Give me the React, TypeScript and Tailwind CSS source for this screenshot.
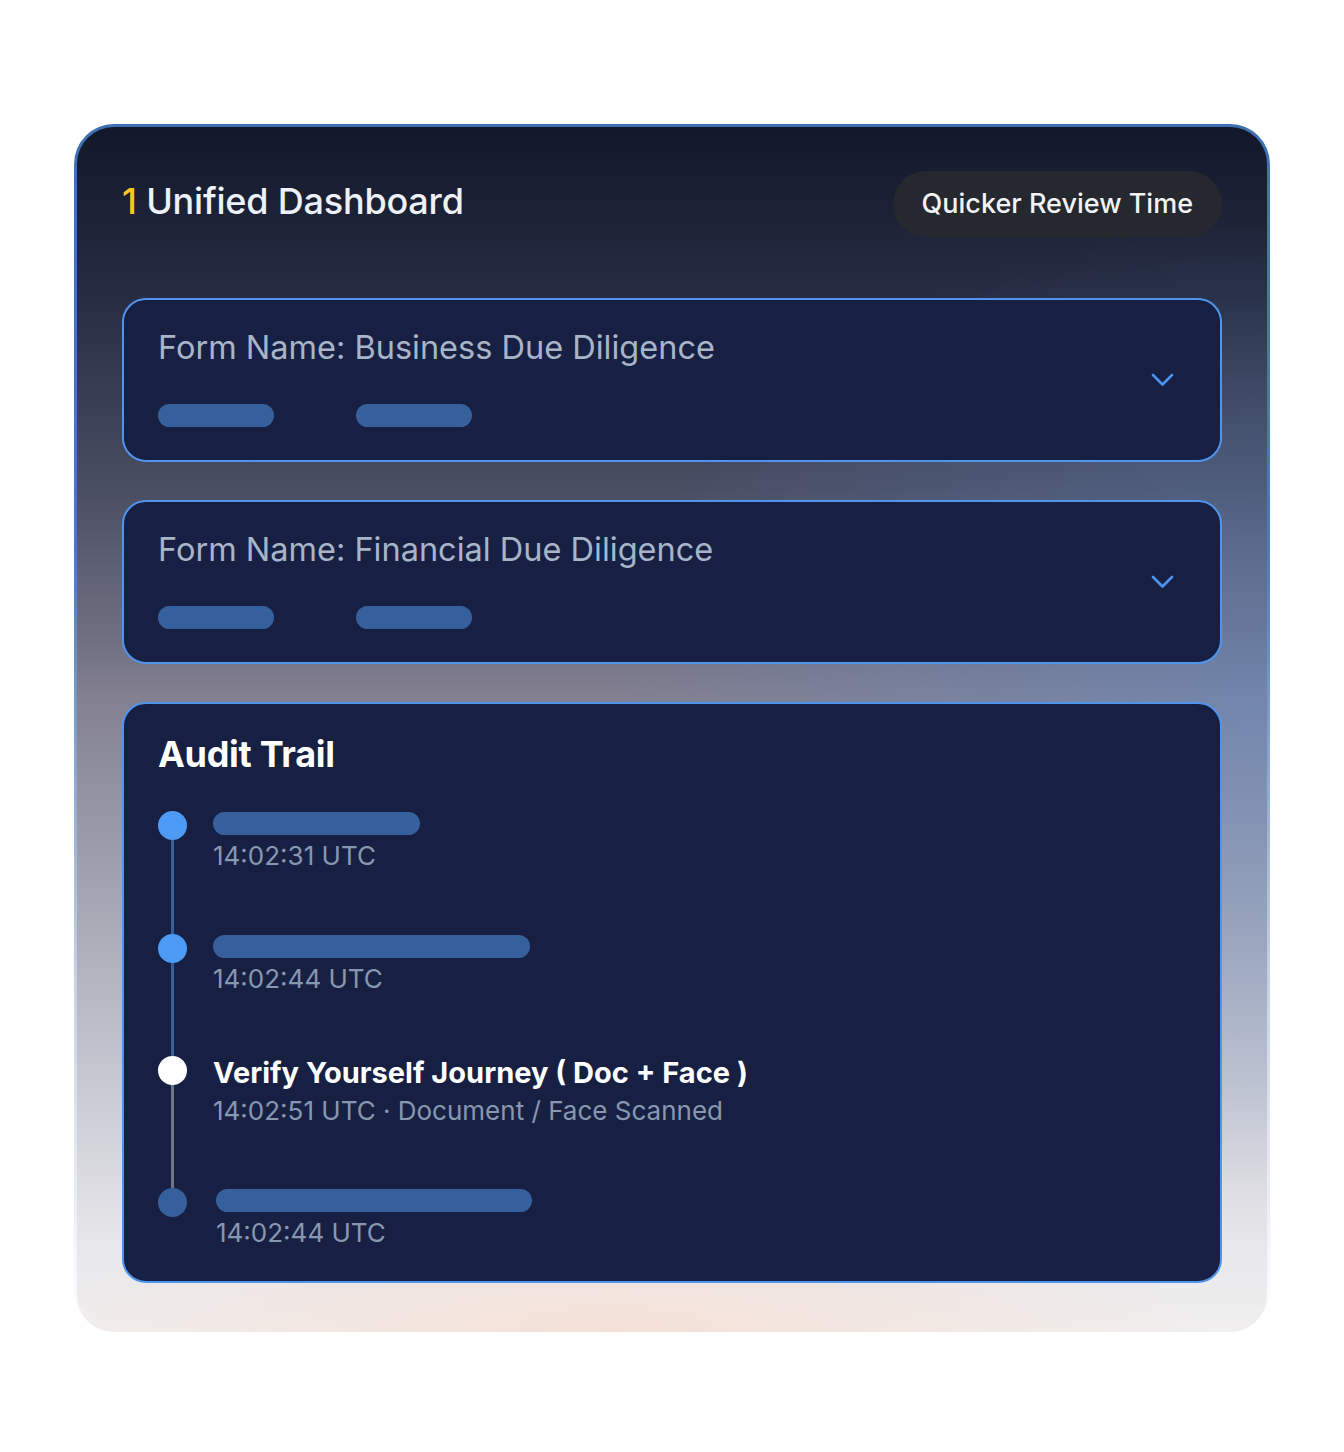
import React from "react";

const font = { fontFamily: "Inter, 'Noto Sans', sans-serif" };

function Chevron() {
  return (
    <svg width="23" height="14" viewBox="0 0 23 14" fill="none">
      <polyline
        points="2,2 11.5,11.5 21,2"
        stroke="#4d94ee"
        strokeWidth="2.6"
        strokeLinecap="round"
        strokeLinejoin="round"
      />
    </svg>
  );
}

function FormPanel({ name }: { name: string }) {
  return (
    <div className="flex h-[164px] items-center justify-between rounded-[24px] border-2 border-[#4f95ee] bg-[#172042] pl-[34px] pr-[46px]">
      <div className="flex flex-col self-start pt-[28px]">
        <div className="text-[32.5px] leading-[40px] text-[#a8b4c8]">Form Name: {name}</div>
        <div className="mt-[36px] flex gap-[82px]">
          <div className="h-[23px] w-[116px] rounded-full bg-[#36609c]" />
          <div className="h-[23px] w-[116px] rounded-full bg-[#36609c]" />
        </div>
      </div>
      <Chevron />
    </div>
  );
}

type Step = {
  dot: string;
  line?: string;
  height: string;
  bar?: string;
  title?: string;
  time: string;
  shift?: string;
};

const steps: Step[] = [
  { dot: "bg-[#4d9af5]", line: "bg-[#36609c]", height: "h-[123px]", bar: "w-[207px]", time: "14:02:31 UTC" },
  { dot: "bg-[#4d9af5]", line: "bg-[#36609c]", height: "h-[122px]", bar: "w-[317px]", time: "14:02:44 UTC" },
  {
    dot: "bg-white",
    line: "bg-[#6f7687]",
    height: "h-[132px]",
    title: "Verify Yourself Journey ( Doc + Face )",
    time: "14:02:51 UTC · Document / Face Scanned",
  },
  { dot: "bg-[#36609c]", height: "h-[100px]", bar: "w-[316px]", time: "14:02:44 UTC", shift: "pl-[3px]" },
];

function Timeline() {
  return (
    <div className="mt-[35px] flex flex-col">
      {steps.map((s, i) => (
        <div key={i} className={`flex ${s.height}`}>
          <div className="flex w-[29px] flex-col items-center">
            <div className={`h-[29px] w-[29px] shrink-0 rounded-full ${s.dot}`} />
            {s.line ? <div className={`w-[3px] flex-1 ${s.line}`} /> : null}
          </div>
          <div className={`ml-[26px] flex flex-col ${s.shift ?? ""}`}>
            {s.bar ? (
              <div className={`mt-[1px] h-[23px] rounded-full bg-[#36609c] ${s.bar}`} />
            ) : (
              <div className="text-[29px] font-bold leading-[34px] text-white">{s.title}</div>
            )}
            <div className="mt-[5px] text-[26px] leading-[31px] text-[#8797b0]">{s.time}</div>
          </div>
        </div>
      ))}
    </div>
  );
}

export default function App() {
  return (
    <div className="min-h-[1452px] w-full bg-white pl-[74px] pt-[124px]" style={font}>
      <div className="w-[1196px] rounded-[40px] bg-[linear-gradient(to_bottom,#3f70b2_0%,#4a7ab8_35%,rgba(140,160,200,0.5)_70%,rgba(240,240,244,0)_100%)] px-[3px] pt-[3px]">
        <div className="h-[1205px] rounded-[37px] bg-[image:radial-gradient(ellipse_55%_40%_at_100%_48%,rgba(95,140,205,0.45)_0%,rgba(95,140,205,0)_100%),radial-gradient(ellipse_50%_10%_at_45%_100%,rgba(245,222,210,0.85)_0%,rgba(245,222,210,0)_100%),linear-gradient(to_bottom,#121729_0%,#262c42_14%,#4a4e63_30%,#6e6e80_42%,#817f90_47%,#9c9dab_60%,#c4c5cf_78%,#e6e6ea_92%,#f1efef_100%)] px-[45px] pt-[44px]">
          <div className="flex items-start justify-between">
            <div className="mt-[8px] text-[36px] font-medium leading-[44px] tracking-[-0.2px] text-[#eef1f7]">
              <span className="text-[#f5c81e]">1</span> Unified Dashboard
            </div>
            <div className="flex h-[66px] items-center rounded-full bg-[#25282f] px-[29px] text-[27px] font-medium text-[#f2f3f5]">
              Quicker Review Time
            </div>
          </div>

          <div className="mt-[61px] flex flex-col gap-[38px]">
            <FormPanel name="Business Due Diligence" />
            <FormPanel name="Financial Due Diligence" />
            <div className="h-[581px] rounded-[24px] border-2 border-[#4f95ee] bg-[#172042] pl-[34px] pt-[28px]">
              <div className="text-[36px] font-bold leading-[44px] tracking-[-0.3px] text-white">Audit Trail</div>
              <Timeline />
            </div>
          </div>
        </div>
      </div>
    </div>
  );
}
